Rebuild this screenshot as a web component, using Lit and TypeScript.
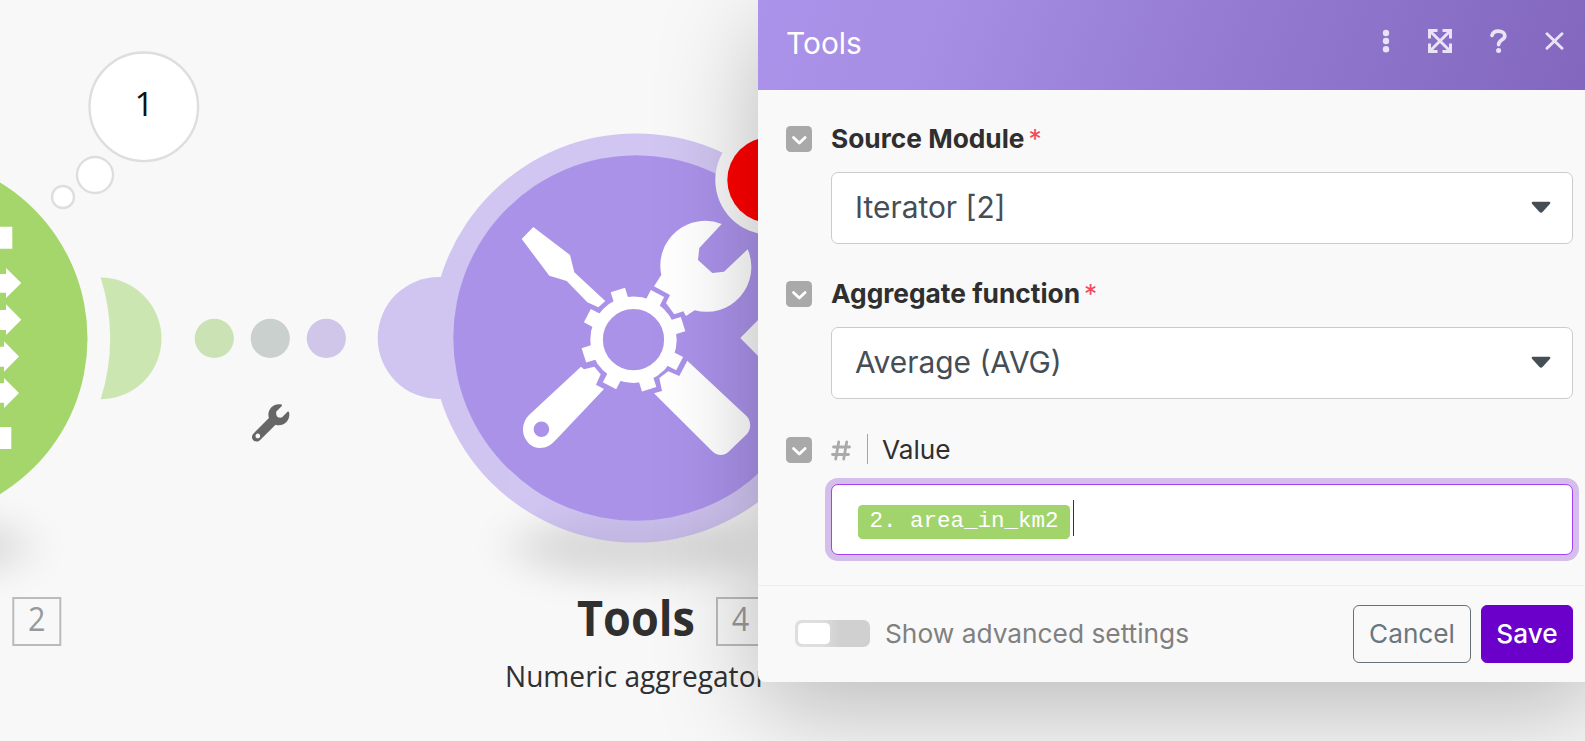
import { LitElement, html, css, svg } from "lit";
import { customElement, property } from "lit/decorators.js";

const GEAR_TEETH = [0, 1, 2, 3, 4, 5, 6, 7].map((i) => -17.5 + i * 45);

@customElement("scenario-canvas")
class ScenarioCanvas extends LitElement {
  static styles = css`
    :host {
      display: block;
      width: 1585px;
      height: 741px;
      background: #f8f8f8;
    }
    svg {
      display: block;
    }
    text {
      font-family: "Open Sans", "Noto Sans", sans-serif;
    }
    .name {
      font-size: 49px;
      font-weight: 700;
      fill: #303030;
    }
    .kind {
      font-size: 28.5px;
      fill: #303030;
    }
    .index {
      font-size: 33px;
      fill: #999;
      text-anchor: middle;
    }
    .count {
      font-size: 33.5px;
      fill: #111;
      text-anchor: middle;
    }
  `;

  private indexBadge(x: number, label: string) {
    return svg`
      <rect x=${x} y="598" width="47" height="47" fill="none" stroke="#b9bcba" stroke-width="2"/>
      <text class="index" x=${x + 23.5} y="631" textLength="17.5" lengthAdjust="spacingAndGlyphs">${label}</text>`;
  }

  render() {
    return html`
      <svg width="1585" height="741" viewBox="0 0 1585 741">
        <defs>
          <filter id="soft" x="-50%" y="-150%" width="200%" height="400%">
            <feGaussianBlur stdDeviation="24 18" />
          </filter>
        </defs>

        <ellipse cx="636" cy="547" rx="124" ry="32" fill="#000" opacity=".12" filter="url(#soft)" />
        <ellipse cx="-95" cy="547" rx="124" ry="32" fill="#000" opacity=".12" filter="url(#soft)" />

        <!-- iterator module -->
        <circle cx="-95" cy="338.3" r="182.5" fill="#a4d66c" />
        <g fill="#fff">
          <path d="M0 226.7h12.3v22H0zM0 427h11.3v22H0z" />
          <path d="M0 274h6v-6L21.3 283 6 298v-5.3H0z" />
          <path d="M0 310h6v-5.7l15.3 15.4L6 335v-5H0z" />
          <path d="M0 346.7h4v-5.4l15 15.2-15 15.2v-5H0z" />
          <path d="M0 383.3h4V378l15 15-15 15v-5.3H0z" />
        </g>
        <path d="M100.7 277.6A60.8 60.8 0 1 1 100.7 399.2A204.6 204.6 0 0 0 100.7 277.6Z" fill="#cce6b2" />

        <g fill="#fff" stroke="#dedede" stroke-width="2.4">
          <circle cx="143.8" cy="106.8" r="54.3" />
          <circle cx="95" cy="175" r="18" />
          <circle cx="63" cy="197" r="11" />
        </g>
        <text class="count" x="144" y="116">1</text>

        <circle cx="214.3" cy="338.4" r="19.6" fill="#cae2b4" />
        <circle cx="270.3" cy="338.4" r="19.6" fill="#cad0ce" />
        <circle cx="326.3" cy="338.4" r="19.6" fill="#cfc6ea" />
        <path
          transform="translate(252 404.3) scale(.0729)"
          fill="#666"
          d="M507.73 109.1c-2.24-9.03-13.54-12.09-20.12-5.51l-74.36 74.36c-25 10-55 5-67.88-11.31c-14-16-18-44-11.31-67.88l74.36-74.36c6.62-6.62 3.43-17.9-5.66-20.16-47.38-11.74-99.55.91-136.58 37.93-39.64 39.64-50.55 97.1-34.05 147.2L18.74 402.76c-24.99 24.99-24.99 65.51 0 90.5 24.99 24.99 65.51 24.99 90.5 0l213.21-213.21c50.12 16.71 107.47 5.68 147.37-34.22 37.07-37.07 49.7-89.32 37.91-136.73zM80 466c-18 0-32-14-32-32s14-32 32-32 32 14 32 32-14 32-32 32z"
        />

        <!-- aggregator module -->
        <g fill="#aa92e9" opacity=".5">
          <circle cx="438.7" cy="338" r="61" />
          <circle cx="636" cy="338" r="204.6" />
        </g>
        <circle cx="636" cy="338" r="182.7" fill="#aa92e9" />
        <g fill="#fff">
          <path d="M521.7 239L533.3 227 570 255 574.3 272.3 605.3 301 598.3 307.3 587.3 302.3 566.7 281 549.3 275.7Z" />
          <circle cx="633.5" cy="339.7" r="36.9" fill="none" stroke="#fff" stroke-width="12.6" />
          ${GEAR_TEETH.map(
            (a) => svg`<path d="M40 -7.5h12v15h-12z" transform="translate(633.5 339.7) rotate(${a})"/>`
          )}
          <path
            d="M721.7 224L699.3 248 698 260 712.3 273 724 271.7 747.7 249.3A44.8 44.8 0 0 1 694.7 310.2L686 316 683.3 311.3 674.3 314.3 666 303 670 295 654 286.3 661.3 275A44.8 44.8 0 0 1 721.7 224Z"
          />
          <path
            fill-rule="evenodd"
            d="M581 366.7L584 369.3 594.3 366.7 600.7 374.3 596 384.7 604 389 556.7 439C551 445 547 448 539.5 448C533 448 529 444 526.5 440.5C521 433 522 422 529 415ZM549.2 429.3a7.8 7.8 0 1 0-15.6 0a7.8 7.8 0 1 0 15.6 0Z"
          />
          <path
            d="M687.3 360.7L747 416.5C751 421 751.5 429 747 434L728.3 452C724 456 717 456 712 451L654 393.3 662 391 659.3 378 668.3 371.3 679.3 376Z"
          />
        </g>
        <path d="M740.3 338L780 298V378Z" fill="#f8f8f8" />
        <circle cx="770" cy="180" r="54.7" fill="#f8f8f8" />
        <circle cx="770" cy="180" r="42.7" fill="#ff0000" />

        <text class="name" x="577" y="636" textLength="118" lengthAdjust="spacingAndGlyphs">Tools</text>
        ${this.indexBadge(13.3, "2")} ${this.indexBadge(717, "4")}
        <text class="kind" x="505" y="687" textLength="262" lengthAdjust="spacingAndGlyphs">Numeric aggregator</text>
      </svg>
    `;
  }
}

@customElement("field-row")
class FieldRow extends LitElement {
  @property() label = "";
  @property({ type: Boolean }) required = false;
  @property({ type: Boolean }) numeric = false;

  static styles = css`
    :host {
      display: grid;
      grid-template-columns: 26px 1fr;
      column-gap: 19px;
    }
    .toggle {
      width: 26px;
      height: 26px;
      border-radius: 4.5px;
      background: #a9a9a9;
    }
    .toggle svg {
      display: block;
    }
    .label {
      height: 25px;
      display: flex;
      align-items: center;
      font-size: 26.3px;
      line-height: 25px;
      font-weight: 700;
      color: #2f2f2f;
      white-space: nowrap;
    }
    .label.plain {
      font-size: 26.2px;
      font-weight: 400;
    }
    .star {
      font-weight: 400;
      color: #f4495d;
      margin-left: 4px;
    }
    .hash {
      width: 20px;
      height: 21px;
      margin-top: 2px;
      flex: none;
    }
    .rule {
      width: 1px;
      height: 30px;
      background: #a5a5a5;
      margin: 0 14px 0 16px;
      flex: none;
    }
    .control {
      grid-column: 2;
      margin-top: 20px;
    }
    .control.tight {
      margin-top: 21px;
    }
  `;

  render() {
    return html`
      <div class="toggle">
        <svg width="26" height="26" fill="none" stroke="#fff" stroke-width="2.8" stroke-linecap="round" stroke-linejoin="round">
          <path d="M7.5 11.5L13.3 17l5.8-5.5" />
        </svg>
      </div>
      <div class="label ${this.numeric ? "plain" : ""}">
        ${this.numeric
          ? html`<svg class="hash" viewBox="0 0 20 21" fill="none" stroke="#aaa" stroke-width="2.8" stroke-linecap="round">
                <path d="M7.7 2L4.7 19M15.7 2L12.7 19M2.5 7H18.5M1.5 14.5H17.5" />
              </svg>
              <span class="rule"></span>`
          : ""}
        <span>${this.label}</span>
        ${this.required ? html`<span class="star">*</span>` : ""}
      </div>
      <div class="control ${this.numeric ? "tight" : ""}"><slot></slot></div>
    `;
  }
}

@customElement("select-box")
class SelectBox extends LitElement {
  @property() value = "";

  static styles = css`
    :host {
      display: flex;
      align-items: center;
      justify-content: space-between;
      box-sizing: border-box;
      height: 72px;
      padding: 0 21px 2px 23px;
      border: 1px solid #c8cccf;
      border-radius: 7px;
      background: #fff;
      color: #454d55;
      font-size: 29.9px;
    }
  `;

  render() {
    return html`<span>${this.value}</span>
      <svg width="20" height="12" viewBox="0 0 20 12">
        <path d="M2 .8H18Q20 1 19 2.8L11.5 11Q10 12.4 8.5 11L1 2.8Q0 1 2 .8Z" fill="#454d55" />
      </svg>`;
  }
}

@customElement("tools-panel")
class ToolsPanel extends LitElement {
  static styles = css`
    :host {
      display: flex;
      flex-direction: column;
      width: 843px;
      height: 682px;
      background: #f9f9f9;
      border-radius: 0 0 7px 7px;
      box-shadow: 0 28px 100px rgba(0, 0, 0, 0.25);
      font-family: Inter, "Liberation Sans", sans-serif;
    }
    header {
      height: 90px;
      flex: none;
      box-sizing: border-box;
      padding: 0 37px 5px 28px;
      display: flex;
      align-items: center;
      background: linear-gradient(110deg, #ab92ea 0%, #a68ee4 22%, #9278cf 60%, #8266bd 100%);
      color: #fff;
    }
    .title {
      flex: 1;
      font-size: 29.9px;
    }
    .actions {
      display: flex;
      align-items: center;
      gap: 38px;
      margin-top: -3px;
    }
    .actions svg {
      display: block;
      fill: none;
      stroke: #e9e3f6;
      stroke-width: 3;
    }
    .body {
      height: 496px;
      box-sizing: border-box;
      padding: 36px 28px 0;
      display: grid;
      align-content: start;
      row-gap: 37.4px;
      border-bottom: 1px solid #eee;
    }
    .editor {
      height: 71px;
      box-sizing: border-box;
      border: 1px solid #a341f5;
      border-radius: 7px;
      box-shadow: 0 0 0 6px #d5bdec;
      background: #fff;
      padding-left: 26px;
      display: flex;
      align-items: center;
    }
    .chip {
      width: 212px;
      height: 34px;
      margin-top: 5px;
      border-radius: 4.5px;
      background: #a2d46c;
      color: #fff;
      font: 22.5px/33px "Courier New", "Liberation Mono", monospace;
      text-align: center;
      white-space: pre;
    }
    .caret {
      width: 1px;
      height: 36px;
      margin: -2px 0 0 3px;
      background: #333;
    }
    footer {
      flex: 1;
      box-sizing: border-box;
      padding: 19px 28px 0 37px;
      display: flex;
      align-items: flex-start;
    }
    .switch {
      width: 75px;
      height: 27px;
      box-sizing: border-box;
      margin-top: 15px;
      padding: 3px;
      border-radius: 6.5px;
      background: linear-gradient(90deg, #dedede 35%, #d0d0d0 60%);
    }
    .knob {
      width: 32px;
      height: 21px;
      border-radius: 4.5px;
      background: #fff;
    }
    .hint {
      flex: 1;
      margin-left: 15px;
      font-size: 26.3px;
      line-height: 57px;
      color: #808080;
    }
    .btn {
      height: 58px;
      box-sizing: border-box;
      border-radius: 6px;
      border: 1px solid #66717a;
      color: #6b767d;
      font-size: 26.2px;
      line-height: 55px;
      text-align: center;
      width: 118px;
    }
    .btn.save {
      width: 92px;
      margin-left: 10px;
      background: #6b00cb;
      border-color: #6b00cb;
      color: #fff;
      font-weight: 500;
    }
  `;

  render() {
    return html`
      <header>
        <span class="title">Tools</span>
        <div class="actions">
          <svg width="8" height="24" viewBox="0 0 8 24">
            <g fill="#e9e3f6" stroke="none">
              <circle cx="4" cy="4" r="3.2" /><circle cx="4" cy="12" r="3.2" /><circle cx="4" cy="20.2" r="3.2" />
            </g>
          </svg>
          <svg width="24" height="24" viewBox="0 0 24 24">
            <path d="M2 2L22 22M22 2L2 22M1.5 9.5V1.5H9.5M14.5 1.5H22.5V9.5M22.5 14.5V22.5H14.5M9.5 22.5H1.5V14.5" />
          </svg>
          <svg width="17" height="24" viewBox="0 0 17 24">
            <path d="M2 6.4C2.8 3.4 5 2.2 8.3 2.2C12.2 2.2 14.8 4 14.8 6.9C14.8 11 8.6 10.6 8.6 15.6" stroke-linecap="round" stroke-width="3.7" />
            <circle cx="8.6" cy="21.4" r="2.5" fill="#e9e3f6" stroke="none" />
          </svg>
          <svg width="19" height="24" viewBox="0 0 19 24">
            <path d="M2 4.7L17 19.3M17 4.7L2 19.3" stroke-width="2.9" stroke-linecap="round" />
          </svg>
        </div>
      </header>
      <div class="body">
        <field-row label="Source Module" required><select-box value="Iterator [2]"></select-box></field-row>
        <field-row label="Aggregate function" required><select-box value="Average (AVG)"></select-box></field-row>
        <field-row label="Value" numeric>
          <div class="editor"><span class="chip">2. area_in_km2</span><span class="caret"></span></div>
        </field-row>
      </div>
      <footer>
        <div class="switch"><div class="knob"></div></div>
        <span class="hint">Show advanced settings</span>
        <div class="btn">Cancel</div>
        <div class="btn save">Save</div>
      </footer>
    `;
  }
}

@customElement("app-root")
class AppRoot extends LitElement {
  static styles = css`
    :host {
      display: block;
      position: relative;
      width: 1585px;
      height: 741px;
      overflow: hidden;
    }
    .overlay {
      position: absolute;
      top: 0;
      left: 758px;
    }
  `;

  render() {
    return html`
      <scenario-canvas></scenario-canvas>
      <tools-panel class="overlay"></tools-panel>
    `;
  }
}
